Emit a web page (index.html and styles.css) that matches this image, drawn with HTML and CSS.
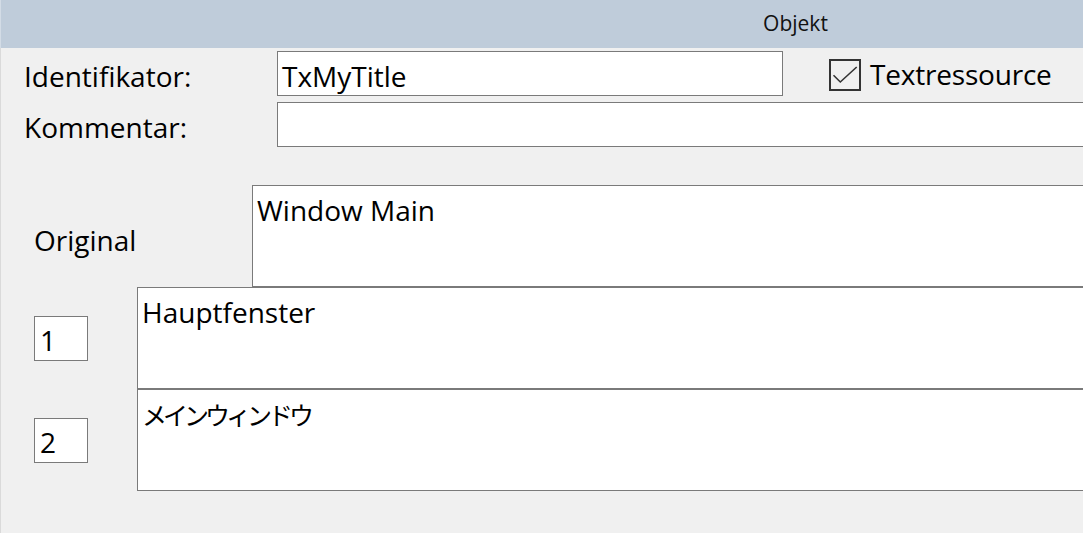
FILE: index.html
```html
<!DOCTYPE html>
<html lang="de">
<head>
<meta charset="utf-8">
<title>Objekt</title>
<link rel="stylesheet" href="styles.css">
</head>
<body>
<div class="window">
  <div class="titlebar">Objekt</div>
  <div class="content">
    <div class="form">
      <div class="label">Identifikator:</div>
      <div class="row-one">
        <div class="field field-id">TxMyTitle</div>
        <div class="check">
          <svg class="check-box" width="32" height="32" viewBox="0 0 32 32">
            <rect x="1" y="1" width="30" height="30" fill="none" stroke="#333" stroke-width="2"/>
            <polyline points="4.5,16.3 11.3,23 27.7,8" fill="none" stroke="#333" stroke-width="1.6"/>
          </svg>
          <span class="check-label">Textressource</span>
        </div>
      </div>
      <div class="label">Kommentar:</div>
      <div class="field field-wide"></div>
    </div>

    <div class="translations">
      <div class="trow trow-orig">
        <div class="tlead lead-orig"><span class="orig-label">Original</span></div>
        <div class="tbox">Window Main</div>
      </div>
      <div class="trow">
        <div class="tlead lead-num"><div class="numbox">1</div></div>
        <div class="tbox">Hauptfenster</div>
      </div>
      <div class="trow">
        <div class="tlead lead-num"><div class="numbox">2</div></div>
        <div class="tbox tbox-jp">メインウィンドウ</div>
      </div>
    </div>
  </div>
</div>
</body>
</html>
```

FILE: styles.css
```css
html, body {
  margin: 0;
  padding: 0;
  background: #f0f0f0;
  overflow: hidden;
}

body {
  width: 1083px;
  height: 533px;
}

.window {
  width: 1590px;
  font-family: "Open Sans", "Noto Sans", "Noto Sans CJK JP", sans-serif;
  color: #000;
}

.titlebar {
  height: 48px;
  background: #bfccda;
  border-left: 1px solid #d3dce6;
  box-sizing: border-box;
  text-align: center;
  font-size: 21px;
  line-height: 46px;
  color: #111;
}

.content {
  border-left: 1px solid #dadada;
  height: 485px;
  box-sizing: border-box;
  font-size: 28px;
  line-height: 38px;
}

.form {
  display: grid;
  grid-template-columns: 276px 1fr;
  row-gap: 6px;
  padding-top: 3px;
}

.label {
  padding: 6px 0 0 23px;
  white-space: nowrap;
}

.field {
  box-sizing: border-box;
  height: 45px;
  border: 1px solid #7a7a7a;
  background: #fff;
  padding: 5px 4px 0;
  white-space: nowrap;
}

.row-one {
  display: flex;
  align-items: flex-start;
}

.field-id {
  width: 506px;
}

.check {
  display: flex;
  align-items: center;
  margin-left: 46px;
  margin-top: 6px;
  gap: 9px;
}

.check-box {
  display: block;
  flex: none;
}

.check-label {
  white-space: nowrap;
  margin-top: -2px;
  letter-spacing: -0.2px;
}

.translations {
  margin-top: 38px;
}

.trow {
  display: flex;
  height: 102px;
}

.tlead {
  flex: none;
  box-sizing: border-box;
}

.lead-orig {
  width: 251px;
  padding: 36px 0 0 33px;
}

.lead-num {
  width: 136px;
  padding: 29px 0 0 33px;
}

.numbox {
  box-sizing: border-box;
  width: 54px;
  height: 45px;
  border: 1px solid #7a7a7a;
  background: #fff;
  padding: 4px 5px 0;
}

.tbox {
  flex: 1;
  box-sizing: border-box;
  height: 102px;
  border: 1px solid #7a7a7a;
  background: #fff;
  padding: 5px 4px 0;
  white-space: nowrap;
}

.tbox-jp {
  font-family: "Noto Sans CJK JP", "Noto Sans", sans-serif;
  font-size: 25px;
  letter-spacing: -4px;
  padding-top: 5px;
}
```
